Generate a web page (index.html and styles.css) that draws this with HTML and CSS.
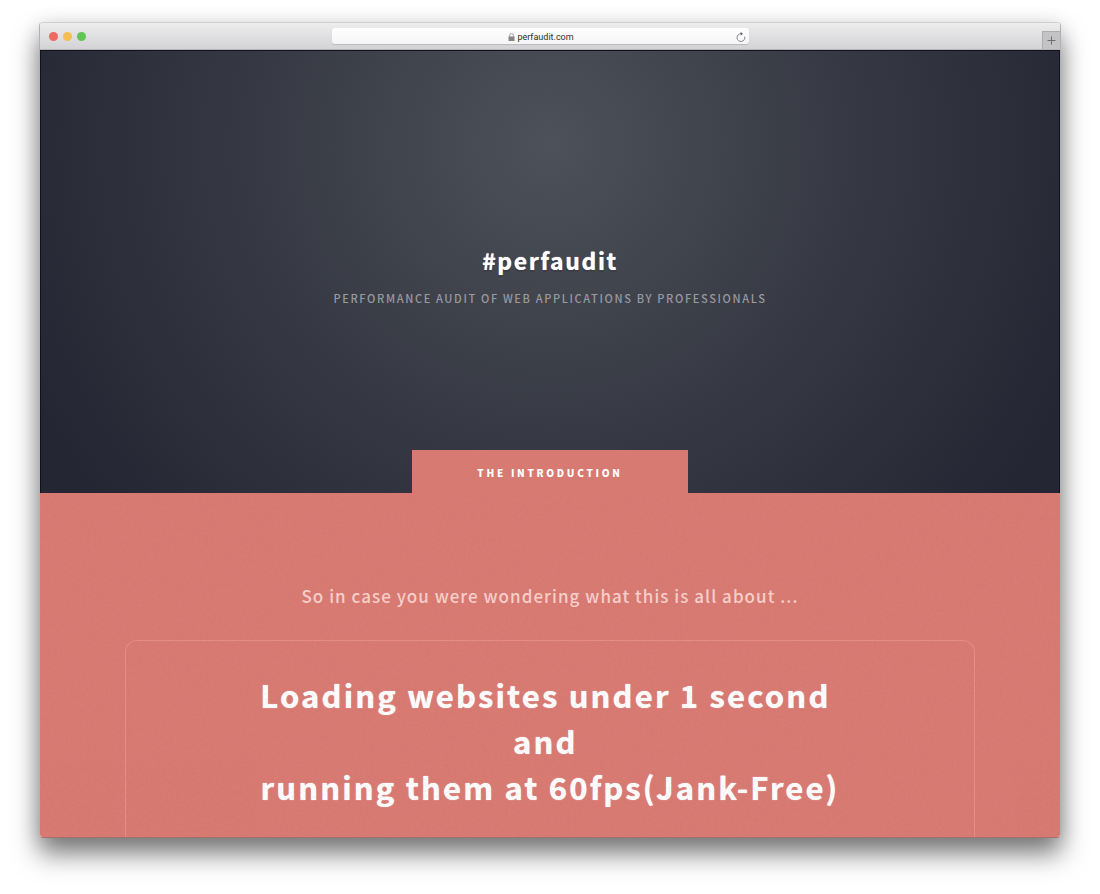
FILE: index.html
```html
<!DOCTYPE html>
<html lang="en">
<head>
<meta charset="utf-8">
<title>#perfaudit</title>
<link rel="stylesheet" href="styles.css">
</head>
<body>
<div class="window">
  <header class="toolbar">
    <div class="lights">
      <button class="light close" aria-label="Close"></button>
      <button class="light minimize" aria-label="Minimize"></button>
      <button class="light expand" aria-label="Zoom"></button>
    </div>
    <div class="address">
      <svg class="lock" viewBox="0 0 7 8" aria-hidden="true"><path d="M1.7 4V2.3a1.8 1.8 0 0 1 3.6 0V4" fill="none" stroke="#98989a" stroke-width="0.9"/><rect x="0.5" y="3.5" width="6" height="4.5" fill="#858587"/></svg>
      <span class="host">perfaudit.com</span>
      <button class="reload" aria-label="Reload"><svg viewBox="0 0 10 10" aria-hidden="true"><path d="M8.7 4.6A3.9 3.9 0 1 1 5.2 1.7" fill="none" stroke="#77777a" stroke-width="0.9"/><path d="M4.7 0L7 1.8L4.7 3.6z" fill="#59595b"/></svg></button>
    </div>
    <button class="new-tab" aria-label="New tab"><svg viewBox="0 0 9 9" aria-hidden="true"><path d="M4.5 0.5v8M0.5 4.5h8" stroke="#6c6c6e"/></svg></button>
  </header>
  <main class="page">
    <section class="hero">
      <div class="hero-copy">
        <h1 class="title">#perfaudit</h1>
        <p class="subtitle">PERFORMANCE AUDIT OF WEB APPLICATIONS BY PROFESSIONALS</p>
      </div>
      <h2 class="tab">THE INTRODUCTION</h2>
    </section>
    <section class="intro">
      <svg class="grain" aria-hidden="true"><filter id="paper"><feTurbulence type="fractalNoise" baseFrequency="0.35" numOctaves="3" seed="4"/><feColorMatrix values="0 0 0 0 0.35  0 0 0 0 0.1  0 0 0 0 0.1  1 0 0 0 -0.3"/></filter><rect width="100%" height="100%" filter="url(#paper)"/></svg>
      <p class="lead">So in case you were wondering what this is all about ...</p>
      <div class="card">
        <p class="statement">Loading websites under 1 second&nbsp;<br>and&nbsp;<br>running them at 60fps(Jank-Free)</p>
      </div>
    </section>
  </main>
</div>
</body>
</html>
```

FILE: styles.css
```css
* { box-sizing: border-box; }
body {
  margin: 0;
  height: 100vh;
  padding: 22px 39px 56px;
  display: flex;
  background: #fff;
  overflow: hidden;
  font-family: "Noto Sans CJK JP", "Noto Sans", sans-serif;
}
h1, h2, p { margin: 0; }
button { border: 0; padding: 0; background: none; }
svg { display: block; }

.window {
  flex: 1;
  display: flex;
  flex-direction: column;
  overflow: hidden;
  border: 1px solid rgba(95, 80, 85, 0.45);
  border-top-color: #d0d0d2;
  border-bottom-color: #a0706f;
  border-radius: 4px;
  background-clip: padding-box;
  box-shadow: 0 16px 26px rgba(0, 0, 0, 0.5), 0 2px 20px rgba(0, 0, 0, 0.12);
}

.toolbar {
  flex: none;
  height: 27px;
  display: grid;
  grid-template-columns: 1fr 417px 1fr;
  align-items: center;
  background: linear-gradient(#ededee, #d3d2d5);
  border-bottom: 1px solid #b5b5ba;
}
.lights { display: flex; gap: 5px; padding-left: 9px; }
.light { width: 9px; height: 9px; border-radius: 50%; }
.close { background: #ee6a5f; }
.minimize { background: #f4bf50; }
.expand { background: #62c655; }
.address {
  height: 16px;
  margin: 0 10px 0 -10px;
  padding: 1px 3px 0 5px;
  display: grid;
  grid-template-columns: 1fr auto auto 1fr;
  align-items: center;
  gap: 2px;
  border-radius: 3px;
  background: linear-gradient(#fefefe, #f5f5f6);
  box-shadow: 0 1px 1px rgba(0, 0, 0, 0.14);
}
.lock { grid-column: 2; width: 7px; height: 8px; }
.host { font: 9px/12px Roboto, sans-serif; color: #2e2e30; }
.reload { justify-self: end; }
.reload svg { width: 10px; height: 10px; }
.new-tab {
  justify-self: end;
  align-self: end;
  width: 18px;
  height: 18px;
  display: grid;
  place-items: center;
  background: #c3c3c6;
  border: 1px solid #acacaf;
  border-width: 1px 0 0 1px;
}
.new-tab svg { width: 9px; height: 9px; }

.page {
  flex: 1;
  min-height: 0;
  display: flex;
  flex-direction: column;
  overflow: hidden;
  background: #d97b73;
}
.hero {
  flex: none;
  padding-top: 189px;
  display: flex;
  flex-direction: column;
  align-items: center;
  text-align: center;
  border: solid #10131f;
  border-width: 1px 1px 0;
  background: radial-gradient(circle at 50% 21%, #4d5159 0, #373a44 290px, #242733 570px);
}
.hero-copy { padding-bottom: 142px; }
.title {
  font-size: 23px;
  line-height: 40px;
  font-weight: 700;
  letter-spacing: 0.07em;
  color: #fff;
  text-shadow: 0 0 1px #fff, 0 1px 2px rgba(0, 0, 0, 0.5);
}
.subtitle {
  margin-top: 8px;
  font-size: 11px;
  line-height: 20px;
  font-weight: 500;
  letter-spacing: 0.15em;
  color: #999aa1;
}
.tab {
  width: 276px;
  height: 43px;
  font-size: 10px;
  line-height: 45px;
  font-weight: 900;
  letter-spacing: 0.27em;
  color: #fff;
  background: #d77a72;
}
.intro {
  flex: 1;
  position: relative;
  padding: 88px 85px 0;
  display: flex;
  flex-direction: column;
  text-align: center;
}
.grain {
  position: absolute;
  inset: 0;
  width: 100%;
  height: 100%;
  opacity: 0.15;
}
.lead {
  font-size: 17px;
  line-height: 30px;
  font-weight: 500;
  letter-spacing: 0.06em;
  color: #fad2cd;
}
.card {
  flex: 1;
  margin-top: 29px;
  padding: 31px 20px;
  border: 1px solid #e78f88;
  border-bottom: 0;
  border-radius: 12px 12px 0 0;
}
.statement {
  font-size: 31px;
  line-height: 46px;
  font-weight: 700;
  letter-spacing: 0.07em;
  color: #fff;
  text-shadow: 0 0 1px #fff;
}
```
